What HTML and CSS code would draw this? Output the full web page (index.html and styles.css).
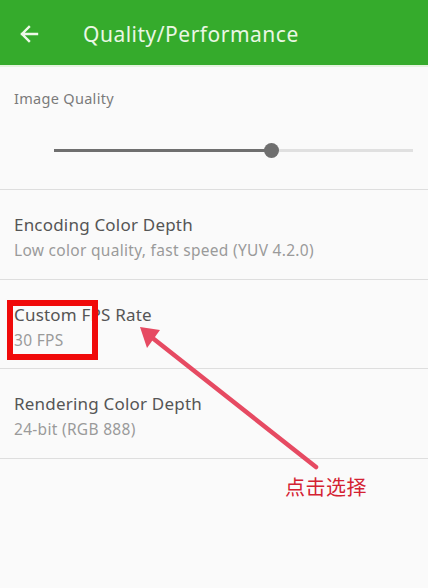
FILE: index.html
```html
<!DOCTYPE html>
<html lang="en">
<head>
  <meta charset="UTF-8">
  <meta name="viewport" content="width=device-width, initial-scale=1.0">
  <title>Quality/Performance</title>
  <link rel="stylesheet" href="styles.css">
</head>
<body>

<div class="screen">
  <div class="toolbar">
    <svg class="back" width="20" height="20" viewBox="0 0 20 20">
      <path d="M18 10H3M10 3L3 10l7 7" fill="none" stroke="#eef8e8" stroke-width="2.4" stroke-linecap="square"/>
    </svg>
    <span class="title">Quality/Performance</span>
  </div>

  <div class="slider-block">
    <div class="slider-label">Image Quality</div>
    <div class="slider">
      <div class="track-on" style="width: 59%"></div>
      <div class="thumb"></div>
      <div class="track-off"></div>
    </div>
  </div>

  <div class="pref">
    <div class="pref-title">Encoding Color Depth</div>
    <div class="pref-sub">Low color quality, fast speed (YUV 4.2.0)</div>
  </div>
  <div class="pref">
    <div class="pref-title">Custom FPS Rate</div>
    <div class="pref-sub">30 FPS</div>
  </div>
  <div class="pref">
    <div class="pref-title">Rendering Color Depth</div>
    <div class="pref-sub">24-bit (RGB 888)</div>
  </div>

  <!-- annotation over the screenshot -->
  <div class="mark-box"></div>
  <svg class="mark-arrow" width="428" height="588" viewBox="0 0 428 588">
    <line x1="316" y1="467" x2="150" y2="336" stroke="#e64a62" stroke-width="4.5" stroke-linecap="round"/>
    <polygon points="140,327 160,330 147,348" fill="#e64a62"/>
  </svg>
  <div class="mark-text">点击选择</div>
</div>

</body>
</html>
```

FILE: styles.css
```css
body {
  margin: 0;
  font-family: "Noto Sans", Lato, sans-serif;
  background-color: #fafafa;
}
.screen {
  position: relative;
  width: 428px;
  height: 588px;
  overflow: hidden;
  background-color: #fafafa;
}
.toolbar {
  height: 67px;
  background-color: #35ab2c;
  border-bottom: 2px solid #e4f3de;
  display: flex;
  align-items: center;
  box-sizing: border-box;
  padding-left: 19px;
  padding-top: 3px;
}
.back {
  margin-right: 44px;
}
.title {
  color: #eaf7e4;
  font-size: 21px;
  letter-spacing: 0.5px;
}
.slider-block {
  height: 123px;
  border-bottom: 1px solid #dedede;
  box-sizing: border-box;
  padding: 21px 14px 0 14px;
}
.slider-label {
  color: #7a7a7a;
  font-size: 14.5px;
  letter-spacing: 0.3px;
}
.slider {
  display: flex;
  align-items: center;
  margin: 34px 1px 0 40px;
  height: 16px;
}
.track-on {
  height: 3px;
  background-color: #6f6f6f;
}
.thumb {
  width: 15px;
  height: 15px;
  border-radius: 50%;
  background-color: #6f6f6f;
  margin: 0 -2px;
  position: relative;
}
.track-off {
  flex: 1;
  height: 3px;
  background-color: #e0e0e0;
}
.pref {
  height: 90px;
  border-bottom: 1px solid #dedede;
  box-sizing: border-box;
  padding: 23px 14px 0 14px;
}
.pref:nth-child(4) {
  height: 89px;
}
.pref-title {
  color: #555;
  font-size: 17px;
  line-height: 24px;
  letter-spacing: 0.2px;
}
.pref-sub {
  color: #9a9a9a;
  font-size: 15.5px;
  line-height: 22px;
  margin-top: 2px;
  letter-spacing: 0.3px;
}
.mark-box {
  position: absolute;
  left: 7px;
  top: 300px;
  width: 79px;
  height: 48px;
  border: 6px solid #f00a0a;
}
.mark-arrow {
  position: absolute;
  left: 0;
  top: 0;
}
.mark-text {
  position: absolute;
  left: 285px;
  top: 472px;
  color: #d42232;
  font-size: 20px;
  font-family: "Noto Sans CJK SC", sans-serif;
  letter-spacing: 0.5px;
}
```
